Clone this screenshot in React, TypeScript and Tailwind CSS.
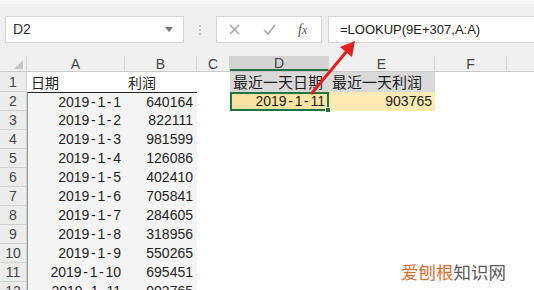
import * as React from "react";

const cjk = { fontFamily: '"Noto Sans CJK SC", "Liberation Sans", sans-serif' };
const latin = { fontFamily: '"Liberation Sans", "Noto Sans CJK SC", sans-serif' };

const rows: [string, string][] = [
  ["2019-1-1", "640164"],
  ["2019-1-2", "822111"],
  ["2019-1-3", "981599"],
  ["2019-1-4", "126086"],
  ["2019-1-5", "402410"],
  ["2019-1-6", "705841"],
  ["2019-1-7", "284605"],
  ["2019-1-8", "318956"],
  ["2019-1-9", "550265"],
  ["2019-1-10", "695451"],
  ["2019-1-11", "903765"],
];

const columns = [
  { key: "A", w: "w-[98px]" },
  { key: "B", w: "w-[72px]" },
  { key: "C", w: "w-[33px]" },
  { key: "D", w: "w-[99px]" },
  { key: "E", w: "w-[106px]" },
  { key: "F", w: "w-[72px]" },
];

// Excel's date font draws the hyphen about as wide as a digit
function DateText({ value }: { value: string }) {
  const parts = value.split("-");
  return (
    <>
      {parts.map((part, i) => (
        <React.Fragment key={i}>
          {i > 0 ? <span className="inline-block w-[8px] text-center">-</span> : null}
          {part}
        </React.Fragment>
      ))}
    </>
  );
}

export default function App() {
  return (
    <div className="relative h-[290px] w-[534px] overflow-hidden bg-white text-[#1e1e1e]" style={latin}>
      <FormulaBar />

      <div className="h-[4px] bg-[#efefef]" />

      {/* column headers */}
      <div className="flex h-[16px] border-b border-[#c8c8c8] bg-[#f0f0f0] text-[14px] leading-[16px] text-[#444]">
        <div className="relative w-[27px] border-r border-[#d4d4d4]">
          <span className="absolute bottom-[2px] right-[3px] h-0 w-0 border-b-[9px] border-l-[9px] border-b-[#c6c6c6] border-l-transparent" />
        </div>
        {columns.map((col) => (
          <div
            key={col.key}
            className={`${col.w} flex items-center justify-center border-r border-[#d4d4d4] ${
              col.key === "D" ? "border-b-2 border-b-[#217346] bg-[#d3d3d3]" : ""
            }`}
          >
            {col.key}
          </div>
        ))}
        <div className="flex-1" />
      </div>

      {/* row 1 */}
      <div className="flex h-[20px] text-[14px] leading-[20px]" style={cjk}>
        <RowHead n={1} />
        <div className="w-[98px] pl-[4px]">日期</div>
        <div className="w-[72px] pl-[3px]">利润</div>
        <div className="w-[33px]" />
        <div className="w-[99px] whitespace-nowrap bg-[#d9d9d9] pl-[3px] text-[15px]">最近一天日期</div>
        <div className="w-[106px] whitespace-nowrap bg-[#d9d9d9] pl-[3px] text-[15px]">最近一天利润</div>
        <div className="flex-1" />
      </div>

      {/* data rows */}
      {rows.map(([date, profit], i) => (
        <div key={date} className="flex h-[19px] text-[14px] leading-[19px]">
          <RowHead n={i + 2} />
          <div
            className={`w-[98px] border-l border-[#8a9a90] bg-[#f4f4f4] pr-[4px] text-right ${
              i === 0 ? "border-t border-t-[#222]" : ""
            }`}
          >
            <DateText value={date} />
          </div>
          <div
            className={`w-[72px] bg-[#f4f4f4] pr-[4px] text-right ${
              i === 0 ? "border-t border-t-[#222]" : ""
            }`}
          >
            {profit}
          </div>
          <div className="w-[33px]" />
          {i === 0 ? (
            <>
              <div className="relative w-[99px] border-2 border-[#217346] bg-[#f8e3a3] pr-[2px] text-right leading-[15px]">
                <DateText value="2019-1-11" />
                <span className="absolute -bottom-[4px] -right-[4px] h-[6px] w-[6px] border border-white bg-[#217346]" />
              </div>
              <div className="w-[106px] bg-[#fde9b2] pr-[3px] text-right">903765</div>
            </>
          ) : (
            <div className="w-[205px]" />
          )}
          <div className="flex-1" />
        </div>
      ))}

      {/* annotation arrow */}
      <svg className="pointer-events-none absolute left-0 top-0" width="534" height="290">
        <line x1="312" y1="93" x2="347" y2="51" stroke="#e3201b" strokeWidth="3" strokeLinecap="round" />
        <polygon points="355,41 352,57 340,47" fill="#e3201b" />
      </svg>

      {/* watermark */}
      <div className="absolute left-[401px] top-[260px] text-[17.5px] leading-[24px]" style={cjk}>
        <span className="text-[#e06a2c]">爱刨根</span>
        <span className="text-[#5a5a5a]">知识网</span>
      </div>
    </div>
  );
}

function FormulaBar() {
  return (
    <div className="h-[52px] border-t-[4px] border-t-[#f6f6f6] bg-[#efefef] pt-[12px]">
      <div className="flex h-[27px] items-stretch">
        <div className="ml-[5px] flex w-[179px] items-center justify-between border border-[#d6d6d6] bg-white pl-[7px] pr-[6px] text-[14px] text-[#333]">
          <span>D2</span>
          <span className="mr-[4px] h-0 w-0 border-x-[4px] border-t-[5px] border-x-transparent border-t-[#777]" />
        </div>
        <div className="flex w-[32px] flex-col items-center justify-center gap-[2px]">
          <span className="h-[2px] w-[2px] rounded-full bg-[#b5b5b5]" />
          <span className="h-[2px] w-[2px] rounded-full bg-[#b5b5b5]" />
          <span className="h-[2px] w-[2px] rounded-full bg-[#b5b5b5]" />
        </div>
        <div className="flex w-[106px] items-center border border-[#d6d6d6] bg-white">
          <svg className="ml-[12px]" width="11" height="11" viewBox="0 0 11 11">
            <path d="M1 1 L10 10 M10 1 L1 10" stroke="#a8a8a8" strokeWidth="1.6" />
          </svg>
          <svg className="ml-[23px]" width="13" height="11" viewBox="0 0 13 11">
            <path d="M1 6 L5 10 L12 1" stroke="#a8a8a8" strokeWidth="1.6" fill="none" />
          </svg>
          <span
            className="ml-[22px] text-[14px] italic text-[#555]"
            style={{ fontFamily: '"Liberation Serif", serif' }}
          >
            f<span className="text-[12px]">x</span>
          </span>
        </div>
        <div className="ml-[6px] flex flex-1 items-center border border-r-0 border-[#d6d6d6] bg-white pl-[11px] text-[13px] text-[#222]">
          =LOOKUP(9E+307,A:A)
        </div>
      </div>
    </div>
  );
}

function RowHead({ n }: { n: number }) {
  return (
    <div
      className="w-[27px] border-b border-r border-[#d0d0d0] bg-[#ececec] text-center text-[14px] text-[#444]"
      style={latin}
    >
      {n}
    </div>
  );
}
